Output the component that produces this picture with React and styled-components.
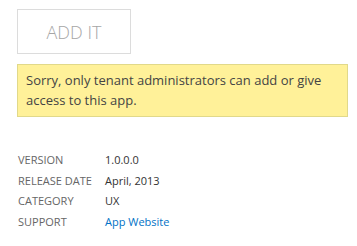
import styled, { createGlobalStyle } from "styled-components";

const GlobalStyle = createGlobalStyle`
  body {
    margin: 0;
    background: #fff;
    font-family: "Open Sans", "Noto Sans", sans-serif;
  }
`;

const Page = styled.div`
  padding: 9px 10px 0 17px;
  display: flex;
  flex-direction: column;
  align-items: flex-start;
`;

const AddButton = styled.button`
  width: 114px;
  height: 45px;
  background: #fff;
  border: 1px solid #dcdcdc;
  color: #a6a6a6;
  font-family: "Open Sans", sans-serif;
  font-size: 18px;
  font-weight: 300;
  padding: 0;
`;

const Notice = styled.div`
  box-sizing: border-box;
  width: 331px;
  margin-top: 10px;
  padding: 5px 8px 6px;
  background: #fff199;
  border: 1px solid #e1d98a;
  color: #444;
  font-size: 13px;
  line-height: 20px;
`;

const Details = styled.div`
  margin-top: 33px;
  display: grid;
  grid-template-columns: 88px auto;
  font-size: 11px;
  line-height: 20.6px;
`;

const Label = styled.span`
  color: #666;
  text-transform: uppercase;
  padding-left: 1px;
`;

const Value = styled.span`
  color: #333;
`;

const Link = styled.a`
  color: #0072c6;
  text-decoration: none;
`;

export default function App() {
  return (
    <>
      <GlobalStyle />
      <Page>
        <AddButton>ADD IT</AddButton>
        <Notice>
          Sorry, only tenant administrators can add or give access to this app.
        </Notice>
        <Details>
          <Label>Version</Label>
          <Value>1.0.0.0</Value>
          <Label>Release Date</Label>
          <Value>April, 2013</Value>
          <Label>Category</Label>
          <Value>UX</Value>
          <Label>Support</Label>
          <Value>
            <Link href="#">App Website</Link>
          </Value>
        </Details>
      </Page>
    </>
  );
}
